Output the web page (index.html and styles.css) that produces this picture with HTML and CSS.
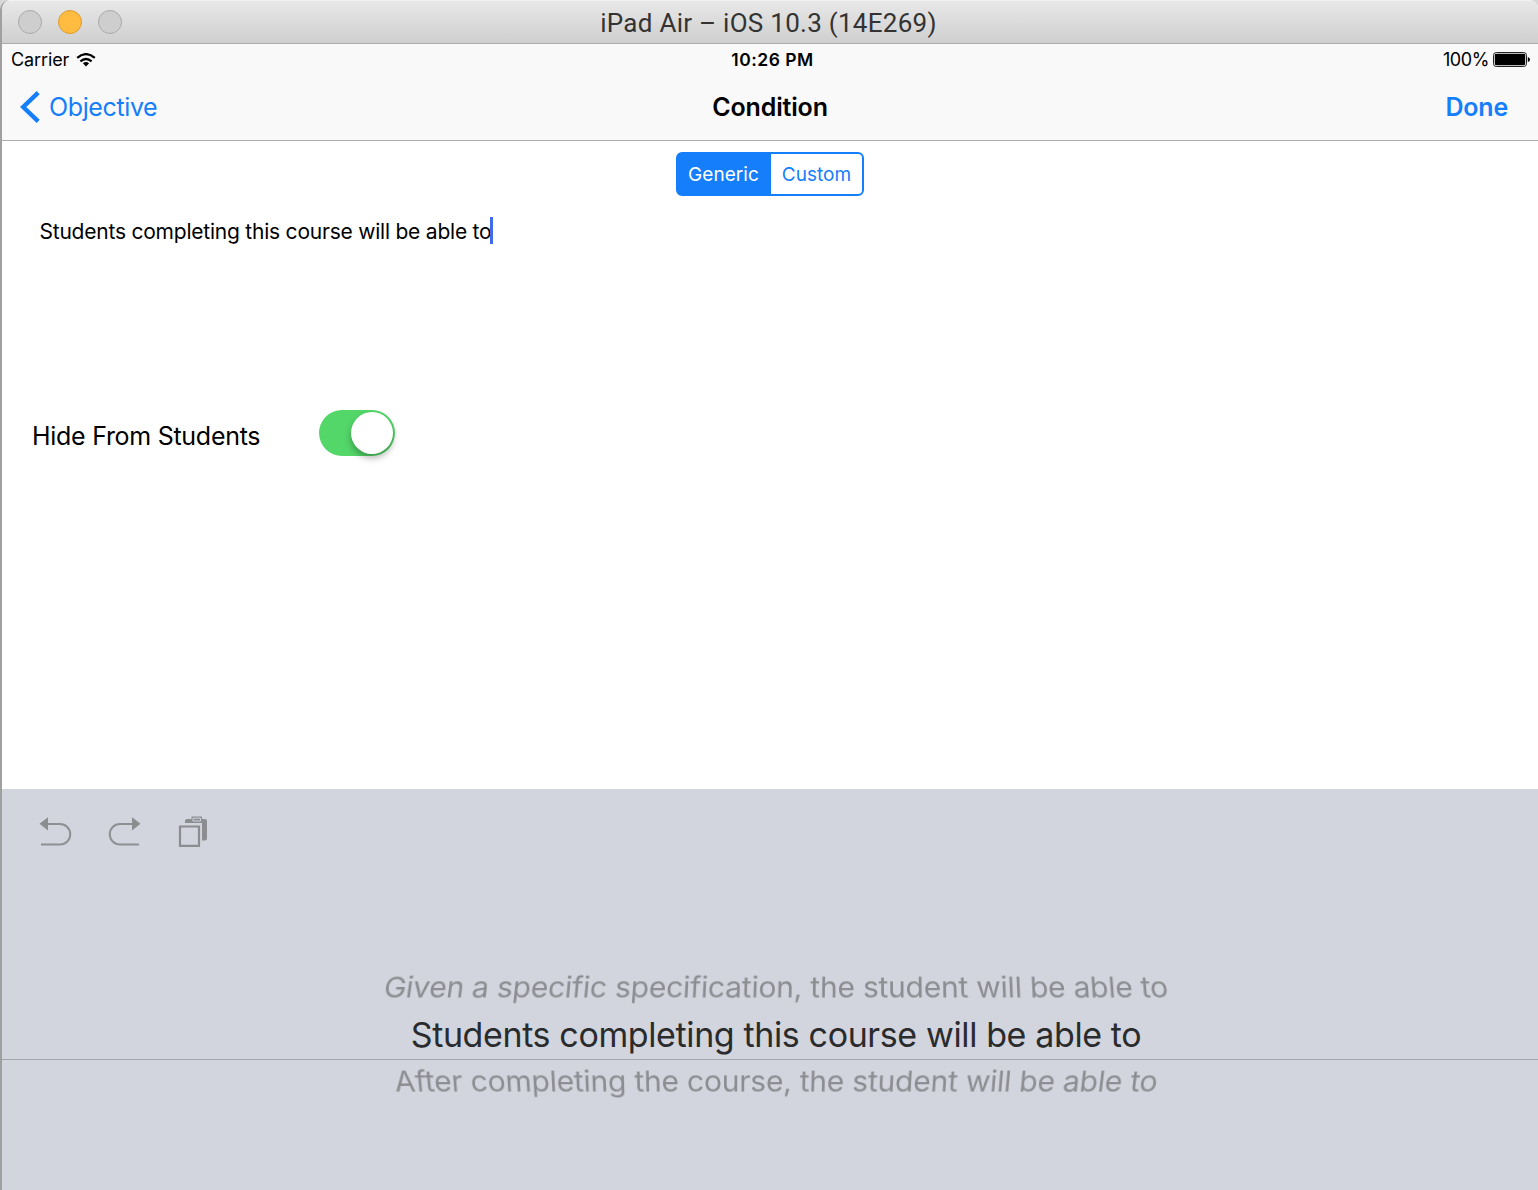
FILE: index.html
```html
<!DOCTYPE html>
<html lang="en">
<head>
<meta charset="utf-8">
<title>iPad Air – iOS 10.3 (14E269)</title>
<link rel="stylesheet" href="styles.css">
</head>
<body>
<div class="window">
  <header class="titlebar">
    <div class="lights"><i class="light"></i><i class="light light-min"></i><i class="light"></i></div>
    <span class="title">iPad Air – iOS 10.3 (14E269)</span>
  </header>
  <div class="statusbar">
    <div class="status-left"><span class="carrier">Carrier</span>
      <svg class="wifi" width="20" height="14" viewBox="0 0 20 14"><g fill="none" stroke="#000" stroke-width="2.3"><path d="M1.2 4.8Q10 -2.5 18.8 4.8"/><path d="M4.4 8.3Q10 3.8 15.6 8.3"/></g><path d="M6.9 10.2Q10 7.8 13.1 10.2L10 13.4Z"/></svg>
    </div>
    <span class="clock">10:26 PM</span>
    <div class="status-right"><span class="percent">100%</span>
      <svg width="37" height="15" viewBox="0 0 37 15"><rect x=".5" y=".5" width="33" height="14" rx="2.8" fill="none" stroke="#222"/><rect x="1.8" y="1.8" width="30.4" height="11.4" rx="1.4"/><path d="M34.8 5Q37 5.500 37 7.500T34.8 10Z"/></svg>
    </div>
  </div>
  <nav class="navbar">
    <a class="back"><svg width="21" height="32" viewBox="0 0 21 32"><path d="M18.2 1.600L3.200 16L18.200 30.400" fill="none" stroke="#157efb" stroke-width="4.400"/></svg><span class="back-text">Objective</span></a>
    <span class="heading">Condition</span>
    <a class="done">Done</a>
  </nav>
  <main class="content">
    <div class="segments"><span class="segment active">Generic</span><span class="segment">Custom</span></div>
    <div class="editor"><span class="entry">Students completing this course will be able to</span><i class="caret"></i></div>
    <div class="setting"><span class="label">Hide From Students</span><span class="switch"><i class="knob"></i></span></div>
  </main>
  <section class="keyboard">
    <div class="tools">
      <svg width="33" height="32" viewBox="0 0 33 32"><path d="M8 8H21A10 10 0 0 1 21 28.500H2" fill="none" stroke="#8e9093" stroke-width="2"/><path d="M.5 7.800L9 1.200V14.500Z" fill="#8b8d90"/></svg>
      <svg width="33" height="32" viewBox="0 0 33 32"><path d="M25 8H12A10 10 0 0 0 12 28.500H31" fill="none" stroke="#8e9093" stroke-width="2"/><path d="M32.500 7.800L24 1.200V14.500Z" fill="#8b8d90"/></svg>
      <svg class="clipboard" width="30" height="32" viewBox="0 0 30 32"><path d="M7 7V5Q7 3 9 3H13.500V.5H24V3H27Q29 3 29 5V22Q29 24.500 26.500 24.500H24V7Z" fill="#8b8d90"/><path d="M15 2.200H22.500V5H15Z" fill="#8b8d90" stroke="#d2d5dd"/><path d="M2 10.500H21V29.800H2Z" fill="none" stroke="#8b8d90" stroke-width="2.200"/></svg>
    </div>
    <div class="picker">
      <div class="row row-above">Given a specific specification, the student will be able to</div>
      <div class="row row-current">Students completing this course will be able to</div>
      <div class="row row-below">After completing the course, the student will be able to</div>
    </div>
  </section>
</div>
</body>
</html>
```
FILE: styles.css
```css
* { box-sizing: border-box; }
body { margin: 0; background: #d8d8d8; font-family: Inter, "Liberation Sans", sans-serif; color: #000; }
.window { display: flex; flex-direction: column; width: 1538px; height: 1190px; border-left: 2px solid #a0a0a0; border-radius: 10px 9px 0 0; overflow: hidden; background: #fff; white-space: nowrap; }
.titlebar { display: grid; grid-template-columns: 1fr auto 1fr; align-items: center; height: 44px; background: linear-gradient(#e8e8e8, #cfcfcf); border-bottom: 1px solid #acacac; border-top: 1px solid #f2f2f2; }
.lights { display: flex; gap: 16px; padding-left: 16px; }
.light { width: 24px; height: 24px; border-radius: 50%; background: #cecece; border: 1px solid #aaa; }
.light-min { background: #ffbc40; border-color: #dc9a33; }
.title { font: 26px Roboto, sans-serif; color: #333; padding-top: 2px; margin-left: -3px; letter-spacing: .27px; }
.statusbar { display: grid; grid-template-columns: 1fr auto 1fr; height: 31px; align-items: center; background: #f9f9f9; font-size: 18px; padding: 0 8px 0 9px; }
.status-left, .status-right { display: flex; align-items: center; gap: 7px; }
.carrier { letter-spacing: -.12px; }
.percent { letter-spacing: -.4px; }
.status-right { justify-content: flex-end; gap: 4px; }
.clock { font-weight: 600; font-size: 17.5px; padding-left: 4px; letter-spacing: .5px; }
.navbar { display: grid; grid-template-columns: 1fr auto 1fr; align-items: center; height: 66px; padding: 0 30px 2px 18px; background: #f9f9f9; border-bottom: 1px solid #acacac; font-size: 25px; color: #157efb; }
.back { display: flex; align-items: center; gap: 8px; letter-spacing: -.38px; }
.heading { font-weight: 600; color: #000; padding-left: 12px; letter-spacing: -.15px; }
.done { font-weight: 600; justify-self: end; letter-spacing: -.2px; }
.content { display: flex; flex-direction: column; height: 648px; padding-top: 11px; }
.segments { display: flex; align-self: center; width: 188px; height: 44px; border: 2px solid #157efb; border-radius: 6px; font-size: 19px; color: #157efb; background: #fff; }
.segment { display: flex; align-items: center; justify-content: center; width: 91px; letter-spacing: .05px; }
.segment.active { width: 93px; padding-right: 2px; background: #157efb; color: #fff; }
.editor { display: flex; align-items: center; height: 28px; margin: 20px 0 0 37.500px; font-size: 21px; }
.entry { padding-top: 2px; letter-spacing: -.22px; }
.caret { width: 3px; height: 27px; margin-left: -1px; background: #426bec; }
.setting { display: flex; align-items: center; height: 46px; margin: 166px 0 0 30px; font-size: 25px; }
.label { width: 287px; padding-top: 6px; letter-spacing: -.28px; }
.switch { display: flex; justify-content: flex-end; width: 76px; height: 46px; padding: 2px; border-radius: 23px; background: #53d769; }
.knob { width: 42px; height: 42px; border-radius: 50%; background: #fff; box-shadow: 0 4px 7px rgba(0, 0, 0, .3); }
.keyboard { flex: 1; background: #d2d5dd; }
.tools { display: flex; align-items: center; gap: 36px; height: 86px; padding-left: 37px; }
.clipboard { margin-left: 1px; }
.picker { display: flex; flex-direction: column; padding-top: 89px; }
.row { height: 47px; display: flex; justify-content: center; align-items: center; font-size: 30px; letter-spacing: -.23px; padding-left: 12px; color: #8b8d91; }
.row-above { padding-bottom: 2px; transform: perspective(1030px) rotateX(18deg); transform-origin: 870px 50%; }
.row-below { padding-bottom: 6px; transform: perspective(1030px) rotateX(-18deg); transform-origin: 720px 50%; }
.row-current { height: 49px; padding-bottom: 2px; font-size: 34px; letter-spacing: -.38px; color: #2a2b2d; border-bottom: 1px solid #a4a7ac; }
```
